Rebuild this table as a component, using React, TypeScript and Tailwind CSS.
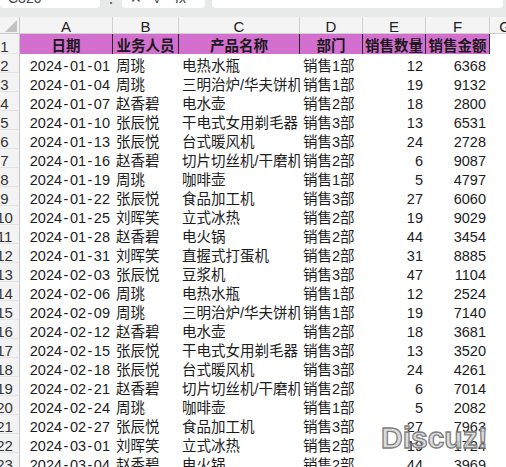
const rows: [string, string, string, string, number, number][] = [
  ["2024-01-01", "周珧", "电热水瓶", "销售1部", 12, 6368],
  ["2024-01-04", "周珧", "三明治炉/华夫饼机", "销售1部", 19, 9132],
  ["2024-01-07", "赵香碧", "电水壶", "销售2部", 18, 2800],
  ["2024-01-10", "张辰悦", "干电式女用剃毛器", "销售3部", 13, 6531],
  ["2024-01-13", "张辰悦", "台式暖风机", "销售3部", 24, 2728],
  ["2024-01-16", "赵香碧", "切片切丝机/干磨机", "销售2部", 6, 9087],
  ["2024-01-19", "周珧", "咖啡壶", "销售1部", 5, 4797],
  ["2024-01-22", "张辰悦", "食品加工机", "销售3部", 27, 6060],
  ["2024-01-25", "刘晖笑", "立式冰热", "销售2部", 19, 9029],
  ["2024-01-28", "赵香碧", "电火锅", "销售2部", 44, 3454],
  ["2024-01-31", "刘晖笑", "直握式打蛋机", "销售2部", 31, 8885],
  ["2024-02-03", "张辰悦", "豆浆机", "销售3部", 47, 1104],
  ["2024-02-06", "周珧", "电热水瓶", "销售1部", 12, 2524],
  ["2024-02-09", "周珧", "三明治炉/华夫饼机", "销售1部", 19, 7140],
  ["2024-02-12", "赵香碧", "电水壶", "销售2部", 18, 3681],
  ["2024-02-15", "张辰悦", "干电式女用剃毛器", "销售3部", 13, 3520],
  ["2024-02-18", "张辰悦", "台式暖风机", "销售3部", 24, 4261],
  ["2024-02-21", "赵香碧", "切片切丝机/干磨机", "销售2部", 6, 7014],
  ["2024-02-24", "周珧", "咖啡壶", "销售1部", 5, 2082],
  ["2024-02-27", "张辰悦", "食品加工机", "销售3部", 27, 7963],
  ["2024-03-01", "刘晖笑", "立式冰热", "销售2部", 19, 1724],
  ["2024-03-04", "赵香碧", "电火锅", "销售2部", 44, 3969],
];

const headers = ["日期", "业务人员", "产品名称", "部门", "销售数量", "销售金额"];
const letters = ["A", "B", "C", "D", "E", "F"];
const widths = ["w-[93px]", "w-[66px]", "w-[121px]", "w-[63px]", "w-[63px]", "w-[64px]"];

function DateText({ value }: { value: string }) {
  const parts = value.split("-");
  return (
    <span>
      {parts.map((p, i) => (
        <span key={i}>
          {i > 0 && <span className="px-[1.5px]">-</span>}
          {p}
        </span>
      ))}
    </span>
  );
}

function RowNum({ n, tall }: { n: number; tall?: boolean }) {
  return (
    <div
      className={`flex w-[20px] shrink-0 justify-center overflow-hidden border-r border-b border-r-[#c4c4c4] border-b-[#e3e3e3] bg-[#f3f3f3] pr-[10px] text-[15px] leading-[19px] text-[#333] ${
        tall ? "h-[20px] pt-[3px]" : "h-[19px] pt-[2px]"
      }`}
    >
      <span className="whitespace-nowrap">{n}</span>
    </div>
  );
}

export default function App() {
  return (
    <div className="relative h-[467px] w-[506px] overflow-hidden bg-white font-['Liberation_Sans','Noto_Sans_CJK_SC',sans-serif] text-[14.5px] text-[#1c1c1c]">
      {/* formula bar, scrolled so only the bottom sliver is visible */}
      <div className="flex h-[17px] items-start bg-[#e8eaea] text-[14px] text-[#444]">
        <div className="h-[8px] w-[100px] overflow-hidden rounded-b-[4px] bg-white pl-[8px]">
          <div className="-mt-[9px] leading-[14px]">C320</div>
        </div>
        <div className="h-[8px] w-[22px] overflow-hidden text-center">
          <div className="-mt-[9px] leading-[14px]">⋮</div>
        </div>
        <div className="h-[8px] w-[83px] overflow-hidden rounded-b-[4px] bg-white pl-[8px]">
          <div className="-mt-[9px] flex gap-[12px] leading-[14px]">
            <span>✕</span>
            <span>✓</span>
            <span className="italic">fx</span>
          </div>
        </div>
        <div className="ml-[7px] h-[8px] w-[291px] rounded-b-[4px] bg-white" />
      </div>

      {/* column letters */}
      <div className="flex h-[17px] bg-[#f4f4f4] text-[15px] leading-[17px] text-[#222]">
        <div className="relative w-[20px] shrink-0 border-r border-b border-[#c8c8c8]">
          <svg className="absolute left-[5px] top-[3px]" width="12" height="12" viewBox="0 0 12 12">
            <polygon points="12,0 12,12 0,12" fill="#c2c2c2" />
          </svg>
        </div>
        {letters.map((l, i) => (
          <div
            key={l}
            className={`${widths[i]} shrink-0 border-r border-b border-[#cfcfcf] pt-[1px] text-center`}
          >
            {l}
          </div>
        ))}
        <div className="w-[30px] shrink-0 border-b border-[#cfcfcf] pt-[1px] text-center">G</div>
      </div>

      {/* header row */}
      <div className="flex h-[20px]">
        <RowNum n={1} tall />
        {headers.map((h, i) => (
          <div
            key={h}
            className={`${widths[i]} h-[20px] shrink-0 overflow-hidden whitespace-nowrap border-r border-[#2a2a2a] bg-[#d36fcf] pt-[3px] text-center font-semibold leading-[19px] text-[#1a1a1a]`}
          >
            {h}
          </div>
        ))}
      </div>

      {/* data rows */}
      {rows.map((r, idx) => (
        <div key={idx} className="flex h-[19px] leading-[19px]">
          <RowNum n={idx + 2} />
          <div className="h-[19px] w-[93px] shrink-0 overflow-hidden whitespace-nowrap pr-[3px] pt-[3px] text-right">
            <DateText value={r[0]} />
          </div>
          <div className="h-[19px] w-[66px] shrink-0 overflow-hidden whitespace-nowrap pl-[3px] pt-[3px]">{r[1]}</div>
          <div className="h-[19px] w-[121px] shrink-0 overflow-hidden whitespace-nowrap pl-[3px] pt-[3px]">{r[2]}</div>
          <div className="h-[19px] w-[63px] shrink-0 overflow-hidden whitespace-nowrap pl-[3px] pt-[3px]">{r[3]}</div>
          <div className="h-[19px] w-[63px] shrink-0 overflow-hidden whitespace-nowrap pr-[3px] pt-[3px] text-right">{r[4]}</div>
          <div className="h-[19px] w-[64px] shrink-0 overflow-hidden whitespace-nowrap pr-[4px] pt-[3px] text-right">{r[5]}</div>
        </div>
      ))}

      {/* forum watermark */}
      <div className="pointer-events-none absolute left-[381px] top-[423px] font-['Liberation_Sans',sans-serif] text-[30px] font-bold leading-[30px] text-[rgba(214,214,214,0.85)] [-webkit-text-stroke:1.3px_#808080]">
        Discuz!
      </div>
    </div>
  );
}
